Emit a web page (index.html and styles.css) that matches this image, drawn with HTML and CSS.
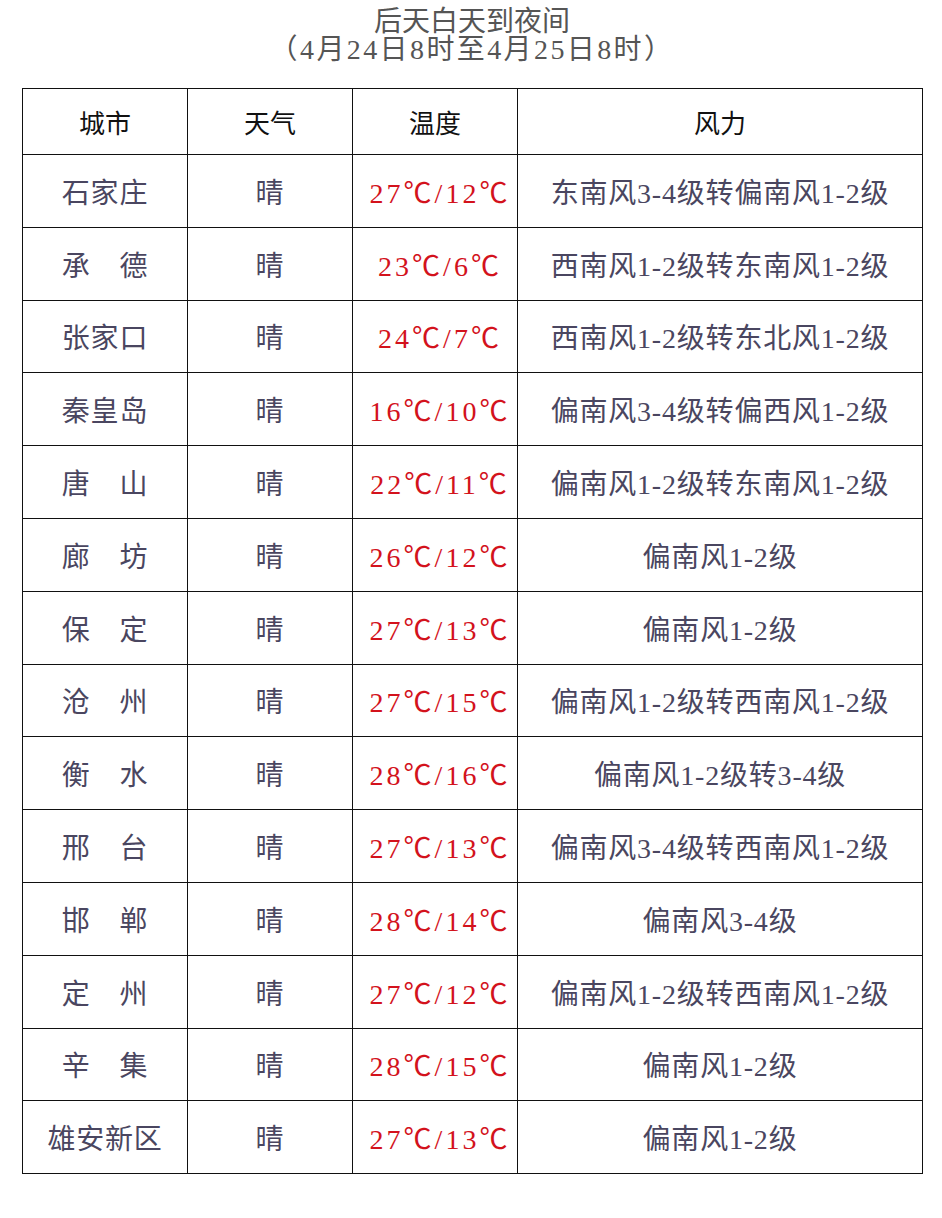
FILE: index.html
```html
<!DOCTYPE html>
<html lang="zh-CN">
<head>
<meta charset="utf-8">
<title>后天白天到夜间</title>
<link rel="stylesheet" href="styles.css">
</head>
<body>
<div class="page">
  <div class="title">
    <div class="t1">后天白天到夜间</div>
    <div class="t2">（4月24日8时至4月25日8时）</div>
  </div>
  <table class="wx">
    <colgroup><col class="c1"><col class="c2"><col class="c3"><col class="c4"></colgroup>
    <thead>
      <tr><th>城市</th><th>天气</th><th>温度</th><th>风力</th></tr>
    </thead>
    <tbody>
      <tr><td>石家庄</td><td>晴</td><td class="temp">27℃/12℃</td><td>东南风3-4级转偏南风1-2级</td></tr>
      <tr><td>承　德</td><td>晴</td><td class="temp">23℃/6℃</td><td>西南风1-2级转东南风1-2级</td></tr>
      <tr><td>张家口</td><td>晴</td><td class="temp">24℃/7℃</td><td>西南风1-2级转东北风1-2级</td></tr>
      <tr><td>秦皇岛</td><td>晴</td><td class="temp">16℃/10℃</td><td>偏南风3-4级转偏西风1-2级</td></tr>
      <tr><td>唐　山</td><td>晴</td><td class="temp">22℃/11℃</td><td>偏南风1-2级转东南风1-2级</td></tr>
      <tr><td>廊　坊</td><td>晴</td><td class="temp">26℃/12℃</td><td>偏南风1-2级</td></tr>
      <tr><td>保　定</td><td>晴</td><td class="temp">27℃/13℃</td><td>偏南风1-2级</td></tr>
      <tr><td>沧　州</td><td>晴</td><td class="temp">27℃/15℃</td><td>偏南风1-2级转西南风1-2级</td></tr>
      <tr><td>衡　水</td><td>晴</td><td class="temp">28℃/16℃</td><td>偏南风1-2级转3-4级</td></tr>
      <tr><td>邢　台</td><td>晴</td><td class="temp">27℃/13℃</td><td>偏南风3-4级转西南风1-2级</td></tr>
      <tr><td>邯　郸</td><td>晴</td><td class="temp">28℃/14℃</td><td>偏南风3-4级</td></tr>
      <tr><td>定　州</td><td>晴</td><td class="temp">27℃/12℃</td><td>偏南风1-2级转西南风1-2级</td></tr>
      <tr><td>辛　集</td><td>晴</td><td class="temp">28℃/15℃</td><td>偏南风1-2级</td></tr>
      <tr><td>雄安新区</td><td>晴</td><td class="temp">27℃/13℃</td><td>偏南风1-2级</td></tr>
    </tbody>
  </table>
</div>
</body>
</html>
```

FILE: styles.css
```css
html, body {
  margin: 0;
  padding: 0;
  background: #ffffff;
}
body {
  font-family: "Liberation Serif", "Noto Sans CJK SC", serif;
}
.page {
  width: 942px;
  height: 1218px;
  padding: 8px 0 0 22px;
  box-sizing: border-box;
}
.title {
  width: 900px;
  text-align: center;
  color: #555555;
  font-size: 28px;
  line-height: 28px;
  margin-bottom: 24px;
}
.title .t2 {
  letter-spacing: 2.4px;
}
.wx {
  width: 900px;
  border-collapse: collapse;
  table-layout: fixed;
}
.wx .c1, .wx .c2, .wx .c3 { width: 165px; }
.wx .c4 { width: 405px; }
.wx th, .wx td {
  border: 1px solid #111111;
  text-align: center;
  vertical-align: middle;
  padding: 0;
  white-space: nowrap;
}
.wx th {
  height: 65px;
  font-size: 26px;
  font-weight: 400;
  color: #111111;
}
.wx td {
  height: 71.8px;
  font-size: 28px;
  color: #4a4660;
  letter-spacing: 0.8px;
}
.wx td.temp {
  color: #d3121c;
  letter-spacing: 3px;
  padding-left: 10px;
}
```
